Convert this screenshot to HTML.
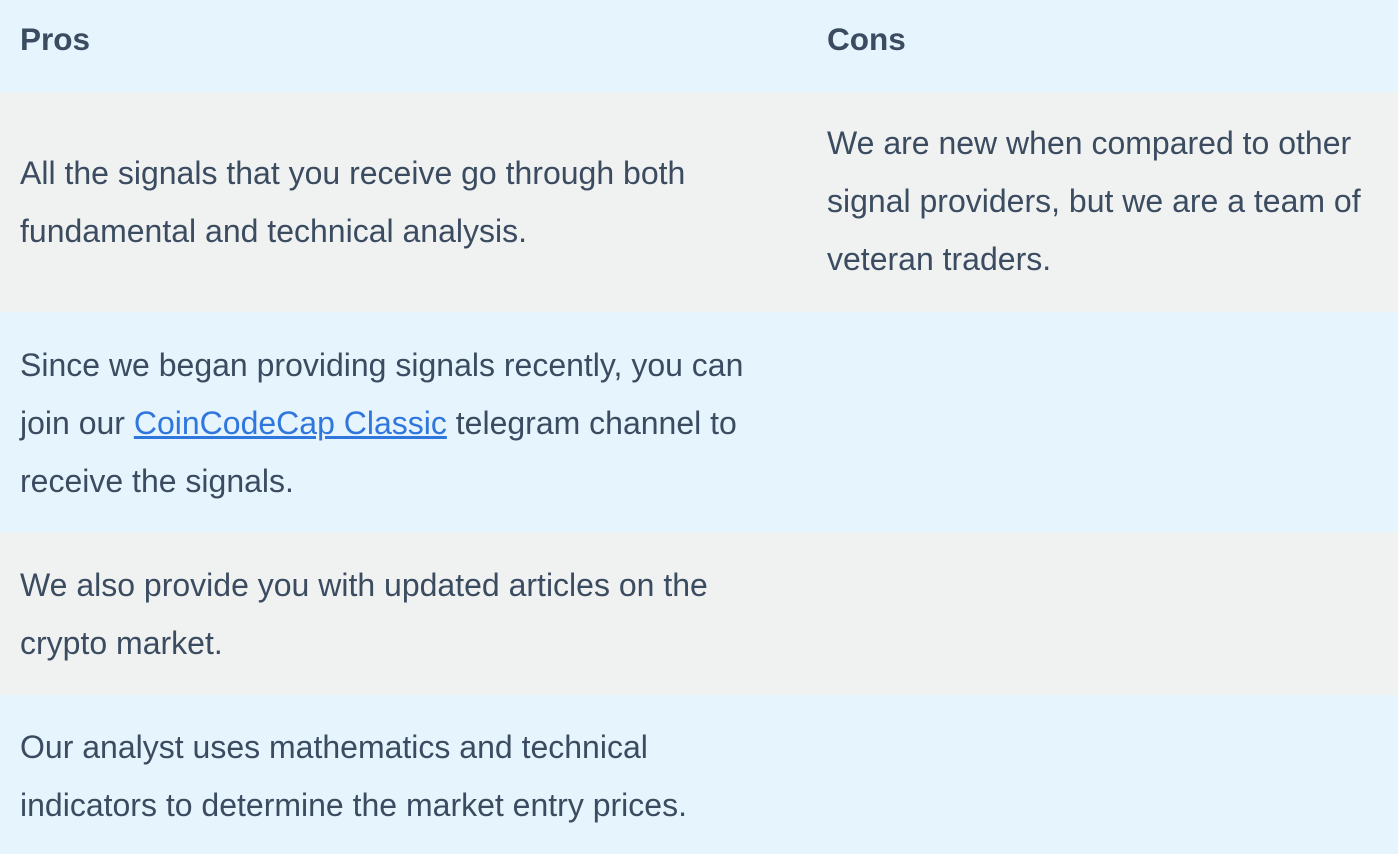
<!DOCTYPE html>
<html><head><meta charset="utf-8"><style>
html,body{margin:0;padding:0;width:1398px;height:854px;overflow:hidden;font-family:"Liberation Sans",Arial,sans-serif;color:#3b4c61;}
.r{position:absolute;left:0;width:1398px;}
.b{background:#e6f4fd}.g{background:#f0f1f1}
.t{position:absolute;font-size:32px;line-height:58px;white-space:nowrap}
.h{font-weight:bold}
a{color:#2f76dd;text-decoration:underline}
</style></head><body>
<div class="r b" style="top:0;height:92px"></div>
<div class="r g" style="top:92px;height:220px"></div>
<div class="r b" style="top:312px;height:220px"></div>
<div class="r g" style="top:532px;height:163px"></div>
<div class="r b" style="top:695px;height:159px"></div>

<div class="t h" style="left:20px;top:10px;font-size:31.5px">Pros</div>
<div class="t h" style="left:827px;top:10px;font-size:31.5px">Cons</div>

<div class="t" style="left:20px;top:144px">All the signals that you receive go through both<br>fundamental and technical analysis.</div>
<div class="t" style="left:827px;top:114px">We are new when compared to other<br>signal providers, but we are a team of<br>veteran traders.</div>

<div class="t" style="left:20px;top:336px">Since we began providing signals recently, you can<br>join our <a>CoinCodeCap Classic</a> telegram channel to<br>receive the signals.</div>

<div class="t" style="left:20px;top:556px">We also provide you with updated articles on the<br>crypto market.</div>

<div class="t" style="left:20px;top:718px">Our analyst uses mathematics and technical<br>indicators to determine the market entry prices.</div>
</body></html>
